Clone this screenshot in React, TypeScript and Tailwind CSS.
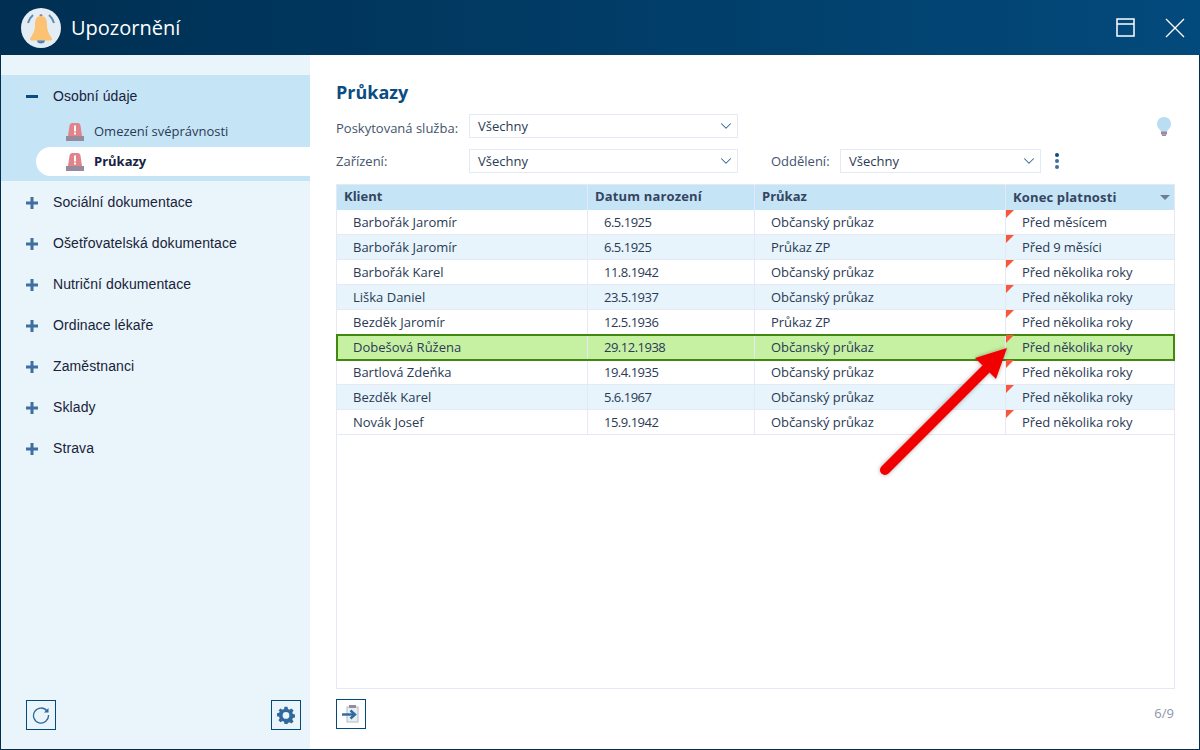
import React from 'react';
import { ChevronDown } from 'lucide-react';

const groups = ['Sociální dokumentace', 'Ošetřovatelská dokumentace', 'Nutriční dokumentace', 'Ordinace lékaře', 'Zaměstnanci', 'Sklady', 'Strava'];

const rows = [
  ['Barbořák Jaromír', '6.5.1925', 'Občanský průkaz', 'Před měsícem'],
  ['Barbořák Jaromír', '6.5.1925', 'Průkaz ZP', 'Před 9 měsíci'],
  ['Barbořák Karel', '11.8.1942', 'Občanský průkaz', 'Před několika roky'],
  ['Liška Daniel', '23.5.1937', 'Občanský průkaz', 'Před několika roky'],
  ['Bezděk Jaromír', '12.5.1936', 'Průkaz ZP', 'Před několika roky'],
  ['Dobešová Růžena', '29.12.1938', 'Občanský průkaz', 'Před několika roky'],
  ['Bartlová Zdeňka', '19.4.1935', 'Občanský průkaz', 'Před několika roky'],
  ['Bezděk Karel', '5.6.1967', 'Občanský průkaz', 'Před několika roky'],
  ['Novák Josef', '15.9.1942', 'Občanský průkaz', 'Před několika roky'],
];

const Siren = () => (
  <svg width="18" height="18" viewBox="0 0 18 18" className="shrink-0">
    <path d="M2 13 L3.500 2.500 Q3.800 0 6 0 H12 Q14.200 0 14.500 2.500 L16 13 Z" fill="#e0838b" />
    <rect x="0" y="13" width="18" height="5" fill="#978a9c" />
    <rect x="8" y="2.500" width="2" height="6" fill="#fff" />
    <rect x="8" y="9.500" width="2" height="2" fill="#fff" />
  </svg>
);

const PlusMark = () => (
  <svg width="12" height="12" viewBox="0 0 12 12" className="shrink-0" fill="#3f6f9e">
    <rect x="0" y="4.500" width="12" height="3" />
    <rect x="4.500" y="0" width="3" height="12" />
  </svg>
);

const Select = ({ className }: { className: string }) => (
  <div className={`h-6 flex items-center justify-between border border-[#e4e9f5] bg-white pl-2 pr-[2px] text-[13px] text-[#2b3a55] ${className}`}>
    <span className="pt-[2px]">Všechny</span>
    <ChevronDown size={18} strokeWidth={1.4} className="text-[#2f6594]" />
  </div>
);

const App = () => {
  return (
    <div className="relative w-[1200px] h-[750px] flex flex-col overflow-hidden bg-white font-['Open_Sans',sans-serif]">
      <header className="h-[55px] shrink-0 flex items-center bg-gradient-to-r from-[#002f52] to-[#034a7c] text-white">
        <div className="ml-[21px] w-10 h-10 rounded-full bg-[#e4edf3] flex items-center justify-center">
          <svg width="32" height="32" viewBox="0 0 32 32">
            <path d="M3 11 Q4.500 6 8 3" stroke="#5c8db5" strokeWidth="2" fill="none" />
            <path d="M29 11 Q27.500 6 24 3" stroke="#5c8db5" strokeWidth="2" fill="none" />
            <circle cx="16" cy="3.500" r="1.500" fill="#97869a" />
            <path d="M12 28 a4 3.500 0 0 0 8 0 Z" fill="#4f86bd" />
            <path d="M16 4 C11 4 10 8 10 13 C10 19 7.500 23 5 26.500 Q4.500 28.500 6.500 28.500 H25.500 Q27.500 28.500 27 26.500 C24.500 23 22 19 22 13 C22 8 21 4 16 4 Z" fill="#fbc274" />
          </svg>
        </div>
        <h1 className="ml-[10px] text-[20px] font-normal">Upozornění</h1>
        <div className="ml-auto flex items-center mr-[15px] gap-[30px]">
          <svg width="19" height="19" viewBox="0 0 19 19" fill="none" stroke="#fff" strokeWidth="1.500">
            <rect x="1" y="1" width="17" height="17" />
            <path d="M1 6 H18" />
          </svg>
          <svg width="20" height="20" viewBox="0 0 20 20" fill="none" stroke="#fff" strokeWidth="1.300">
            <path d="M1 1 L19 19 M19 1 L1 19" />
          </svg>
        </div>
      </header>

      <div className="flex-1 flex min-h-0 border-b border-r border-[#002f52]">
        <aside className="w-[310px] shrink-0 flex flex-col bg-[#e9f5fb] border-l border-[#002f52] pt-5 pb-[19px]">
          <div className="h-[106px] bg-[#c5e4f6] flex flex-col">
            <div className="h-[42px] flex items-center pl-[25px] pt-[1px] font-['Liberation_Sans',sans-serif] text-[14px] tracking-[0.1px] text-[#1a2238]">
              <div className="w-3 h-[3px] bg-[#0a4d80] shrink-0" />
              <span className="ml-[15px]">Osobní údaje</span>
            </div>
            <div className="h-[30px] flex items-center pl-[65px] text-[13px] text-[#2b3a55]">
              <Siren />
              <span className="ml-[10px]">Omezení svéprávnosti</span>
            </div>
            <div className="ml-[35px] h-[29px] flex items-center pl-[30px] bg-white rounded-l-full text-[13px] font-bold text-[#17233f]">
              <Siren />
              <span className="ml-[10px]">Průkazy</span>
            </div>
          </div>
          <ul className="flex flex-col">
            {groups.map((g) => (
              <li key={g} className="h-[41px] flex items-center pl-[25px] font-['Liberation_Sans',sans-serif] text-[14px] tracking-[0.1px] text-[#1a2238] first:mt-[1px]">
                <PlusMark />
                <span className="ml-[15px]">{g}</span>
              </li>
            ))}
          </ul>
          <div className="mt-auto flex justify-between pl-[25px] pr-[9px]">
            <button className="w-[30px] h-[30px] border border-[#034a7c] flex items-center justify-center">
              <svg width="18" height="18" viewBox="0 0 18 18" fill="none">
                <path d="M15 5 A7.500 7.500 0 1 0 16.500 9" stroke="#2f6a9a" strokeWidth="1.300" />
                <path d="M16.500 2 V6.500 H12 Z" fill="#2f6a9a" />
              </svg>
            </button>
            <button className="w-[30px] h-[30px] border border-[#034a7c] flex items-center justify-center">
              <svg width="18" height="18" viewBox="0 0 24 24" fill="#2f6a9a">
                <path fillRule="evenodd" d="M10 1h4l.6 3.100 2 .8L19.300 3.200l2.800 2.800-1.700 2.700.8 2 3.100.6v4l-3.100.6-.8 2 1.700 2.700-2.800 2.800-2.700-1.700-2 .8L14 24h-4l-.6-3.100-2-.8-2.700 1.700-2.800-2.800 1.700-2.700-.8-2-3.100-.6v-4l3.100-.6.8-2L1.900 6l2.800-2.800 2.700 1.700 2-.8L10 1zm2 7a4.500 4.500 0 1 0 0 9 4.500 4.500 0 0 0 0-9z" />
              </svg>
            </button>
          </div>
        </aside>

        <main className="flex-1 flex flex-col pl-[26px] pr-[24px] pt-[26px] pb-[20px] min-w-0">
          <h2 className="h-[24px] leading-[22px] text-[18px] font-bold text-[#0a4d80]">Průkazy</h2>
          <div className="mt-[9px] flex items-center h-6 text-[13px] text-[#44546c]">
            <span className="w-[133px] pt-[6px]">Poskytovaná služba:</span>
            <Select className="w-[269px]" />
            <svg width="16" height="21" viewBox="0 0 16 21" className="ml-auto mr-[3px]">
              <path d="M8 1a7 7 0 0 0-4.500 12.400c.9.800 1.500 1.600 1.500 2.600h6c0-1 .6-1.800 1.500-2.600A7 7 0 0 0 8 1z" fill="#b9def2" />
              <rect x="5" y="15.500" width="6" height="3" fill="#978a9c" />
              <rect x="6" y="18.500" width="4" height="1.500" fill="#978a9c" />
            </svg>
          </div>
          <div className="mt-[11px] flex items-center h-6 text-[13px] text-[#44546c]">
            <span className="w-[133px] pt-[2px]">Zařízení:</span>
            <Select className="w-[269px]" />
            <span className="ml-[33px] w-[69px] pt-[2px]">Oddělení:</span>
            <Select className="w-[201px]" />
            <div className="ml-[14px] flex flex-col gap-[2px]">
              <div className="w-1 h-1 rounded-full bg-[#0a4d80]" />
              <div className="w-1 h-1 rounded-full bg-[#3f6f9e]" />
              <div className="w-1 h-1 rounded-full bg-[#3f6f9e]" />
            </div>
          </div>

          <div className="mt-[11px] flex-1 border border-[#e4e9f5] text-[13px] min-h-0">
            <div className="grid grid-cols-[251px_167px_251px_168px] h-[25px] bg-[#c5e4f6] font-bold text-[#35445f]">
              <div className="pl-[7px] leading-[23px] border-r border-[#e4e9f5]">Klient</div>
              <div className="pl-[7px] leading-[23px] border-r border-[#e4e9f5] tracking-[0.15px]">Datum narození</div>
              <div className="pl-[7px] leading-[23px] border-r border-[#e4e9f5]">Průkaz</div>
              <div className="pl-[7px] leading-[23px] flex items-center justify-between pr-[4px] tracking-[0.15px]">
                Konec platnosti
                <span className="w-0 h-0 border-x-[5px] border-x-transparent border-t-[5px] border-t-[#6d7f95]" />
              </div>
            </div>
            {rows.map((r, i) => {
              const selected = i === 5;
              return (
                <div
                  key={i}
                  className={`grid grid-cols-[251px_167px_251px_168px] h-[25px] leading-[24px] text-[#2b3a55] ${
                    selected
                      ? 'bg-[#c6f1a3] outline-2 -outline-offset-1 outline-[#42880f] relative'
                      : i % 2 === 1
                        ? 'bg-[#e7f4fb] border-b border-[#e4e9f5]'
                        : 'bg-white border-b border-[#e4e9f5]'
                  }`}
                >
                  <div className="pl-4 border-r border-[#e4e9f5]">{r[0]}</div>
                  <div className="pl-4 border-r border-[#e4e9f5] tracking-[-0.5px]">{r[1]}</div>
                  <div className="pl-4 border-r border-[#e4e9f5] tracking-[-0.07px]">{r[2]}</div>
                  <div className="relative pl-4 tracking-[-0.1px]">
                    <span className="absolute left-0 top-0 w-0 h-0 border-t-[8px] border-t-[#f9573a] border-r-[8px] border-r-transparent" />
                    {r[3]}
                  </div>
                </div>
              );
            })}
          </div>

          <div className="mt-[10px] flex items-center justify-between h-[30px]">
            <button className="w-[30px] h-[30px] border border-[#034a7c] flex items-center justify-center">
              <svg width="20" height="20" viewBox="0 0 20 20">
                <rect x="6" y="3" width="11" height="15" fill="#e4eff6" stroke="#bfc5cf" strokeWidth="1.200" />
                <rect x="8" y="1" width="7" height="3" fill="#978a9c" />
                <path d="M1 10.500 H12" stroke="#2f6a9a" strokeWidth="2.400" />
                <path d="M9.500 6.500 L14 10.500 L9.500 14.500" stroke="#2f6a9a" strokeWidth="2.400" fill="none" />
              </svg>
            </button>
            <span className="text-[13px] text-[#8a96a8] mr-[1px]">6/9</span>
          </div>
        </main>
      </div>

      {/* red annotation arrow over the table */}
      <svg className="absolute left-[870px] top-[340px] pointer-events-none" width="150" height="150" viewBox="0 0 150 150">
        <defs>
          <filter id="arrowShadow" x="-20%" y="-20%" width="140%" height="140%">
            <feDropShadow dx="0" dy="0" stdDeviation="2" floodColor="#000" floodOpacity="0.35" />
          </filter>
        </defs>
        <g filter="url(#arrowShadow)">
          <path d="M15 130 L116 29" stroke="#f00000" strokeWidth="10" strokeLinecap="round" fill="none" />
          <path d="M137 8 L105 18 L126 39 Z" fill="#f00000" />
        </g>
      </svg>
    </div>
  );
};

export default App;
